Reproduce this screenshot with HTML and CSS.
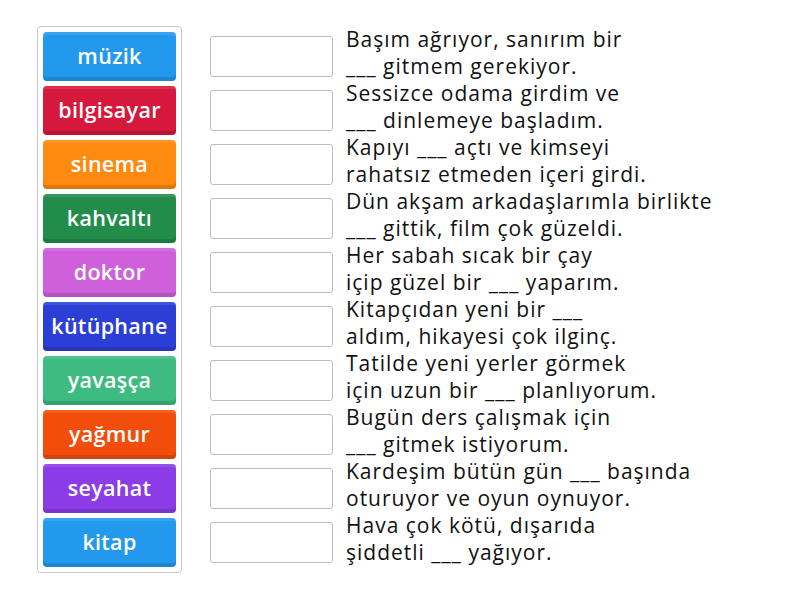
FILE: index.html
```html
<!DOCTYPE html>
<html lang="tr">
<head>
<meta charset="utf-8">
<link rel="stylesheet" href="styles.css">
</head>
<body>
<div class="page">
  <div class="bank">
    <div class="tile blue">müzik</div>
    <div class="tile red">bilgisayar</div>
    <div class="tile orange">sinema</div>
    <div class="tile green">kahvaltı</div>
    <div class="tile pink">doktor</div>
    <div class="tile indigo">kütüphane</div>
    <div class="tile mint">yavaşça</div>
    <div class="tile vermilion">yağmur</div>
    <div class="tile purple">seyahat</div>
    <div class="tile blue">kitap</div>
  </div>
  <div class="rows">
    <div class="row"><div class="slot"></div><div class="text">Başım ağrıyor, sanırım bir<br>___ gitmem gerekiyor.</div></div>
    <div class="row"><div class="slot"></div><div class="text">Sessizce odama girdim ve<br>___ dinlemeye başladım.</div></div>
    <div class="row"><div class="slot"></div><div class="text">Kapıyı ___ açtı ve kimseyi<br>rahatsız etmeden içeri girdi.</div></div>
    <div class="row"><div class="slot"></div><div class="text">Dün akşam arkadaşlarımla birlikte<br>___ gittik, film çok güzeldi.</div></div>
    <div class="row"><div class="slot"></div><div class="text">Her sabah sıcak bir çay<br>içip güzel bir ___ yaparım.</div></div>
    <div class="row"><div class="slot"></div><div class="text">Kitapçıdan yeni bir ___<br>aldım, hikayesi çok ilginç.</div></div>
    <div class="row"><div class="slot"></div><div class="text">Tatilde yeni yerler görmek<br>için uzun bir ___ planlıyorum.</div></div>
    <div class="row"><div class="slot"></div><div class="text">Bugün ders çalışmak için<br>___ gitmek istiyorum.</div></div>
    <div class="row"><div class="slot"></div><div class="text">Kardeşim bütün gün ___ başında<br>oturuyor ve oyun oynuyor.</div></div>
    <div class="row"><div class="slot"></div><div class="text">Hava çok kötü, dışarıda<br>şiddetli ___ yağıyor.</div></div>
  </div>
</div>
</body>
</html>
```

FILE: styles.css
```css
html, body {
  margin: 0;
  padding: 0;
  background: #ffffff;
}

.page {
  display: flex;
  align-items: flex-start;
  padding: 26px 0 0 37px;
  font-family: "Open Sans", "Liberation Sans", sans-serif;
}

.bank {
  width: 133px;
  padding: 5px;
  border: 1px solid #c8c8c8;
  border-radius: 4px;
  display: flex;
  flex-direction: column;
  gap: 5px;
}

.tile {
  height: 49px;
  border-radius: 4px;
  color: #ffffff;
  font-size: 21.5px;
  font-weight: 600;
  letter-spacing: 0.3px;
  white-space: nowrap;
  display: flex;
  align-items: center;
  justify-content: center;
  padding-bottom: 3px;
  box-sizing: border-box;
  box-shadow: inset 0 -4px 0 rgba(0, 0, 0, 0.13), inset 0 3px 0 rgba(255, 255, 255, 0.1);
}

.blue { background: #2399ee; }
.red { background: #d5183b; }
.orange { background: #ff8a10; }
.green { background: #228c4a; }
.pink { background: #cf5fdb; }
.indigo { background: #2b3fd6; }
.mint { background: #3dbb80; }
.vermilion { background: #f34d0c; }
.purple { background: #8b3ce6; }

.rows {
  margin-left: 28px;
  display: flex;
  flex-direction: column;
}

.row {
  height: 54px;
  display: flex;
  align-items: flex-start;
}

.slot {
  width: 123px;
  height: 41px;
  margin-top: 10px;
  box-sizing: border-box;
  border: 1px solid #bdbdbd;
  border-radius: 3px;
  flex: none;
}

.text {
  margin-left: 13px;
  font-size: 21px;
  letter-spacing: 1px;
  line-height: 27px;
  color: #111111;
  white-space: nowrap;
}
```
